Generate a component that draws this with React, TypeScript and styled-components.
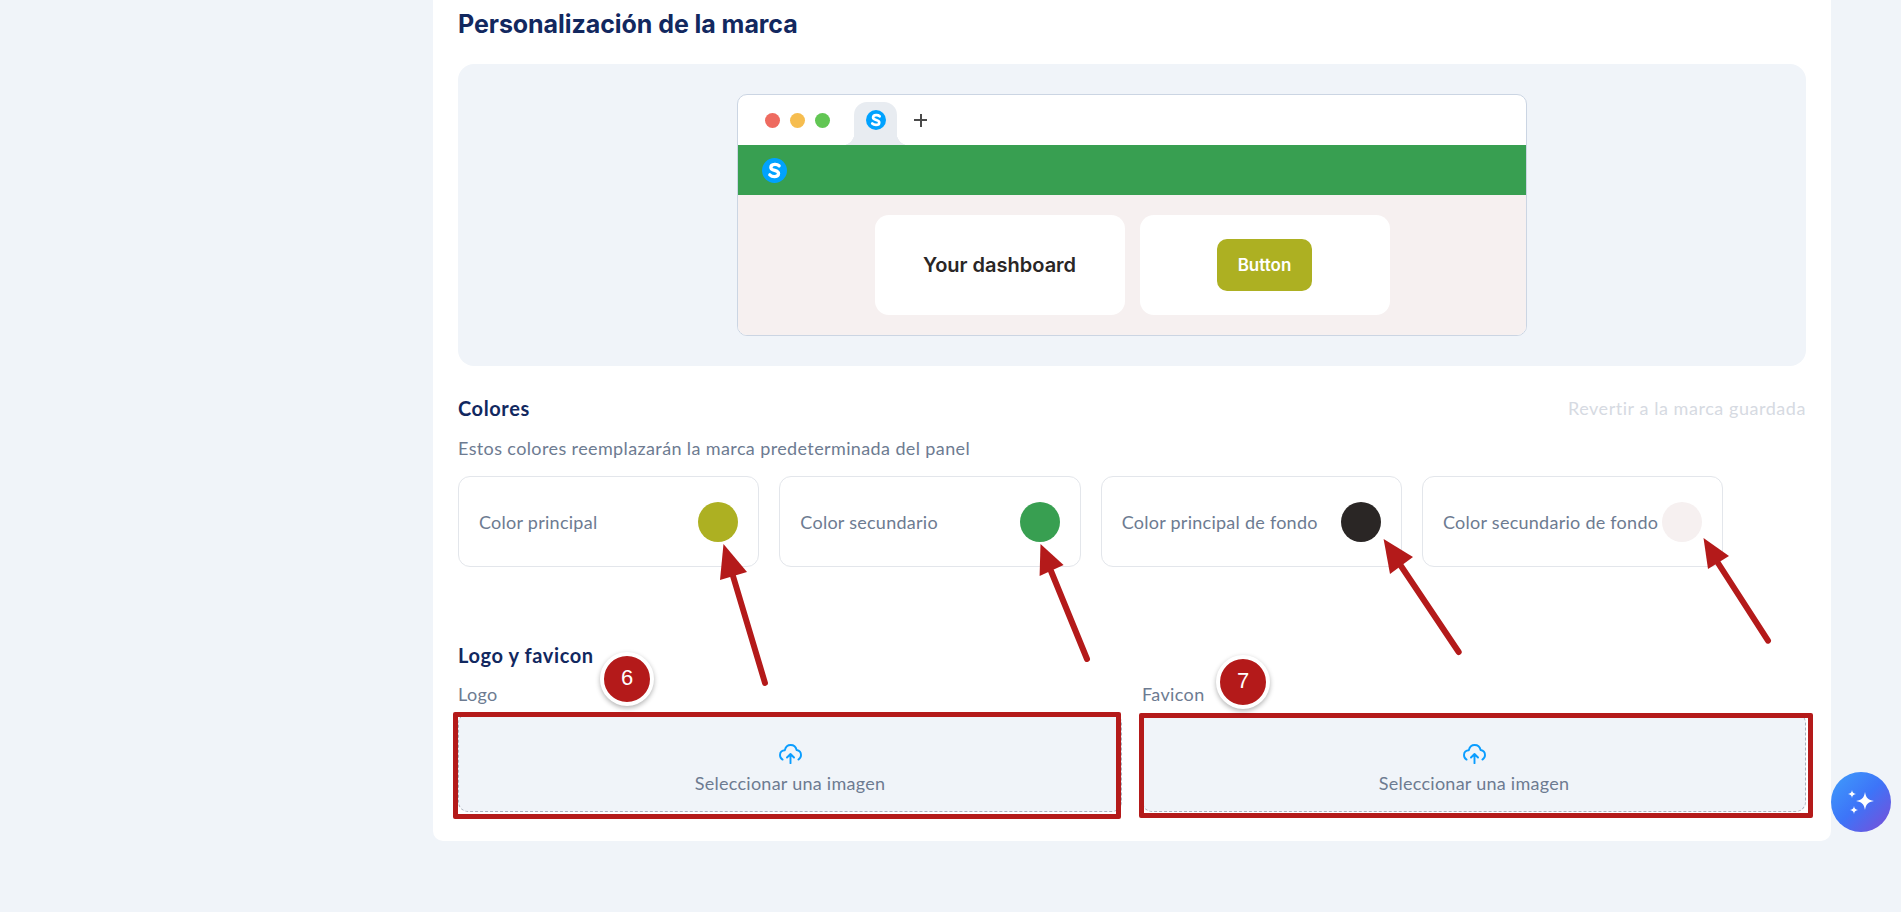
import React from 'react';
import styled, { createGlobalStyle } from 'styled-components';

const GlobalStyle = createGlobalStyle`
  html, body {
    margin: 0;
    padding: 0;
    background: #f0f4f9;
  }
  * {
    box-sizing: border-box;
  }
`;

const Page = styled.div`
  position: relative;
  width: 1901px;
  height: 912px;
  overflow: hidden;
  padding-left: 433px;
  background: #f0f4f9;
  font-family: 'Lato', 'Liberation Sans', sans-serif;
`;

const Card = styled.main`
  width: 1398px;
  padding: 8px 25px 29px;
  background: #ffffff;
  border-radius: 0 0 10px 10px;
`;

const Title = styled.h2`
  margin: 0 0 24px;
  font-family: 'Inter', sans-serif;
  font-size: 25px;
  line-height: 32px;
  font-weight: 700;
  letter-spacing: -0.06px;
  color: #12285f;
`;

const PreviewPanel = styled.section`
  display: flex;
  justify-content: center;
  padding: 30px 0;
  background: #f0f4f9;
  border-radius: 16px;
`;

const BrowserFrame = styled.div`
  width: 790px;
  height: 242px;
  display: flex;
  flex-direction: column;
  border: 1px solid #cbd5e3;
  border-radius: 10px;
  overflow: hidden;
  background: #ffffff;
`;

const TabStrip = styled.div`
  height: 50px;
  flex: none;
  display: flex;
  align-items: flex-end;
  padding-left: 27px;
`;

const Dots = styled.div`
  display: flex;
  gap: 10px;
  align-self: center;
`;

const Dot = styled.span<{ $color: string }>`
  width: 15px;
  height: 15px;
  border-radius: 50%;
  background: ${p => p.$color};
`;

const Tab = styled.div`
  position: relative;
  width: 43px;
  height: 43px;
  margin-left: 24px;
  display: flex;
  justify-content: center;
  padding-top: 8px;
  background: #e8ecf1;
  border-radius: 13px 13px 0 0;

  &::before,
  &::after {
    content: '';
    position: absolute;
    bottom: 0;
    width: 12px;
    height: 12px;
  }
  &::before {
    left: -12px;
    background: radial-gradient(circle at 0 0, transparent 12px, #e8ecf1 12.5px);
  }
  &::after {
    right: -12px;
    background: radial-gradient(circle at 100% 0, transparent 12px, #e8ecf1 12.5px);
  }
`;

const PlusMark = styled.span`
  position: relative;
  align-self: center;
  width: 13px;
  height: 13px;
  margin-left: 17px;

  &::before,
  &::after {
    content: '';
    position: absolute;
    background: #4a4a4a;
  }
  &::before {
    left: 0;
    right: 0;
    top: 5.5px;
    height: 2px;
  }
  &::after {
    top: 0;
    bottom: 0;
    left: 5.5px;
    width: 2px;
  }
`;

const BrandBar = styled.div`
  height: 50px;
  flex: none;
  display: flex;
  align-items: center;
  padding-left: 24px;
  background: #389f51;
`;

const BrowserBody = styled.div`
  flex: 1;
  display: flex;
  justify-content: center;
  gap: 15px;
  padding: 20px 0;
  background: #f6f0f0;
`;

const DemoCard = styled.div`
  width: 250px;
  height: 100px;
  display: flex;
  align-items: center;
  justify-content: center;
  background: #ffffff;
  border-radius: 14px;
`;

const DemoHeading = styled.span`
  font-family: 'Inter', sans-serif;
  font-size: 20px;
  font-weight: 600;
  color: #2a2625;
`;

const DemoButton = styled.button`
  width: 95px;
  height: 52px;
  border: none;
  border-radius: 10px;
  background: #adb022;
  color: #ffffff;
  font-family: 'Inter', sans-serif;
  font-size: 17px;
  font-weight: 600;
`;

const SectionHead = styled.div`
  display: flex;
  align-items: center;
  justify-content: space-between;
  height: 24px;
  margin-top: 30px;
`;

const SectionTitle = styled.h3<{ $top?: number }>`
  margin: ${p => p.$top ?? 0}px 0 0;
  font-size: 20px;
  line-height: 24px;
  font-weight: 700;
  letter-spacing: 0.6px;
  color: #12285f;
`;

const BodyText = styled.span`
  font-size: 18px;
  letter-spacing: 0.26px;
  color: #6d7b91;
`;

const RevertLink = styled(BodyText)`
  letter-spacing: 0.55px;
  color: #d6dae2;
`;

const Hint = styled.p`
  margin: 16px 0 16px;
  font-size: 18px;
  line-height: 24px;
  letter-spacing: 0.38px;
  color: #6d7b91;
`;

const SwatchRow = styled.div`
  display: grid;
  grid-template-columns: repeat(4, 301.33px);
  gap: 20px;
`;

const SwatchCard = styled.div`
  height: 91px;
  display: flex;
  align-items: center;
  justify-content: space-between;
  padding: 0 20px;
  border: 1px solid #e3e6eb;
  border-radius: 12px;
`;

const SwatchDot = styled.span<{ $color: string }>`
  width: 40px;
  height: 40px;
  flex: none;
  border-radius: 50%;
  background: ${p => p.$color};
`;

const UploadGrid = styled.div`
  display: grid;
  grid-template-columns: 664px 664px;
  gap: 20px;
  margin-top: 15px;
`;

const FieldLabel = styled.label`
  display: block;
  margin-bottom: 7px;
  font-size: 18px;
  line-height: 24px;
  letter-spacing: 0.38px;
  color: #6d7b91;
`;

const DropZone = styled.div`
  height: 99px;
  display: flex;
  flex-direction: column;
  align-items: center;
  justify-content: flex-end;
  gap: 8px;
  padding-bottom: 17px;
  background: #f0f4f9;
  border: 1px dashed #a9b1bd;
  border-radius: 10px;
`;

const Highlight = styled.div<{ $x: number; $y: number; $w: number; $h: number }>`
  position: absolute;
  left: ${p => p.$x}px;
  top: ${p => p.$y}px;
  width: ${p => p.$w}px;
  height: ${p => p.$h}px;
  border: 5px solid #b41a1a;
  border-radius: 2px;
`;

const StepBadge = styled.div<{ $x: number; $y: number }>`
  position: absolute;
  left: ${p => p.$x - 27}px;
  top: ${p => p.$y - 27}px;
  width: 54px;
  height: 54px;
  padding-bottom: 3px;
  display: flex;
  align-items: center;
  justify-content: center;
  border: 4px solid #ffffff;
  border-radius: 50%;
  background: #b41a1a;
  box-shadow: 0 2px 5px rgba(0, 0, 0, 0.3);
  color: #ffffff;
  font-family: 'Liberation Sans', sans-serif;
  font-size: 22px;
`;

const ArrowLayer = styled.svg`
  position: absolute;
  left: 0;
  top: 0;
  pointer-events: none;
`;

const AssistantButton = styled.button`
  position: absolute;
  left: 1831px;
  top: 772px;
  width: 60px;
  height: 60px;
  padding: 0;
  display: flex;
  align-items: center;
  justify-content: center;
  border: none;
  border-radius: 50%;
  background: linear-gradient(135deg, #3f9efb 0%, #3d74f8 50%, #7d4cd6 100%);
`;

const BrandMark: React.FC<{ size: number }> = ({ size }) => (
  <svg width={size} height={size} viewBox="0 0 24 24">
    <circle cx="12" cy="12" r="12" fill="#00a2ff" />
    <path
      d="M16.400 7.500c-1-.9-2.600-1.400-4.200-1.300-2 .1-3.700 1.100-3.700 2.900 0 3.700 7.400 2 7.400 5.800 0 1.900-1.900 3-3.900 3-1.700 0-3.400-.6-4.500-1.700"
      fill="none"
      stroke="#ffffff"
      strokeWidth="3.200"
      strokeLinecap="round"
    />
  </svg>
);

const UploadIcon: React.FC = () => (
  <svg width="23" height="20" viewBox="0 0 23 20" fill="none" stroke="#0a9dff" strokeWidth="1.900" strokeLinecap="round" strokeLinejoin="round">
    <path d="M3.600 15.600C1.800 14.600 1 12.800 1 11c0-2.800 2.200-4.800 4.800-4.800C6.600 3 8.800 1 11.600 1c3 0 5.400 2.200 6 5 2.400.4 4.400 2.400 4.400 5 0 2-1 3.600-2.600 4.600" />
    <path d="M11.500 19.200v-9M8 13.500l3.500-3.500 3.500 3.500" />
  </svg>
);

const swatches = [
  { label: 'Color principal', color: '#adb022' },
  { label: 'Color secundario', color: '#389f51' },
  { label: 'Color principal de fondo', color: '#2a2625' },
  { label: 'Color secundario de fondo', color: '#f6f0f0' },
];

// tail and neck of each shaft, then the three points of the head
const arrows = [
  { tail: [765, 683], neck: [733, 576], head: '723.5,544 720,580 747,572' },
  { tail: [1087, 659], neck: [1051, 571], head: '1040.5,544 1039.6,576 1063.6,565' },
  { tail: [1458.7, 652], neck: [1401, 566], head: '1383.6,539 1390,574 1413,557' },
  { tail: [1768, 640.7], neck: [1718, 563], head: '1703.5,538 1708,569 1729,556' },
];

const App: React.FC = () => {
  return (
    <Page>
      <GlobalStyle />
      <Card>
        <Title>Personalización de la marca</Title>

        <PreviewPanel>
          <BrowserFrame>
            <TabStrip>
              <Dots>
                <Dot $color="#ee6b60" />
                <Dot $color="#f6bd4f" />
                <Dot $color="#62c654" />
              </Dots>
              <Tab>
                <BrandMark size={20} />
              </Tab>
              <PlusMark />
            </TabStrip>
            <BrandBar>
              <BrandMark size={25} />
            </BrandBar>
            <BrowserBody>
              <DemoCard>
                <DemoHeading>Your dashboard</DemoHeading>
              </DemoCard>
              <DemoCard>
                <DemoButton>Button</DemoButton>
              </DemoCard>
            </BrowserBody>
          </BrowserFrame>
        </PreviewPanel>

        <SectionHead>
          <SectionTitle>Colores</SectionTitle>
          <RevertLink>Revertir a la marca guardada</RevertLink>
        </SectionHead>
        <Hint>Estos colores reemplazarán la marca predeterminada del panel</Hint>

        <SwatchRow>
          {swatches.map(s => (
            <SwatchCard key={s.label}>
              <BodyText>{s.label}</BodyText>
              <SwatchDot $color={s.color} />
            </SwatchCard>
          ))}
        </SwatchRow>

        <SectionTitle $top={76}>Logo y favicon</SectionTitle>
        <UploadGrid>
          {['Logo', 'Favicon'].map(name => (
            <div key={name}>
              <FieldLabel>{name}</FieldLabel>
              <DropZone>
                <UploadIcon />
                <BodyText>Seleccionar una imagen</BodyText>
              </DropZone>
            </div>
          ))}
        </UploadGrid>
      </Card>

      <ArrowLayer width={1901} height={912}>
        {arrows.map((a, i) => (
          <g key={i}>
            <line
              x1={a.tail[0]}
              y1={a.tail[1]}
              x2={a.neck[0]}
              y2={a.neck[1]}
              stroke="#b41a1a"
              strokeWidth="6"
              strokeLinecap="round"
            />
            <polygon points={a.head} fill="#b41a1a" />
          </g>
        ))}
      </ArrowLayer>

      <Highlight $x={453} $y={712} $w={668} $h={107} />
      <Highlight $x={1139} $y={713} $w={674} $h={105} />
      <StepBadge $x={627} $y={679}>6</StepBadge>
      <StepBadge $x={1243} $y={682}>7</StepBadge>

      <AssistantButton>
        <svg width="36" height="36" viewBox="0 0 36 36" fill="#ffffff">
          <path d="M22 8c1 5.800 3 8 9 9-6 1-8 3.200-9 9-1-5.800-3-8-9-9 6-1 8-3.200 9-9z" />
          <path d="M9 6c.4 2.600 1.400 3.600 4 4-2.600.4-3.600 1.400-4 4-.4-2.600-1.400-3.600-4-4 2.600-.4 3.600-1.400 4-4z" />
          <path d="M11 22c.4 2.600 1.400 3.600 4 4-2.600.4-3.600 1.400-4 4-.4-2.600-1.400-3.600-4-4 2.600-.4 3.600-1.400 4-4z" />
        </svg>
      </AssistantButton>
    </Page>
  );
};

export default App;
